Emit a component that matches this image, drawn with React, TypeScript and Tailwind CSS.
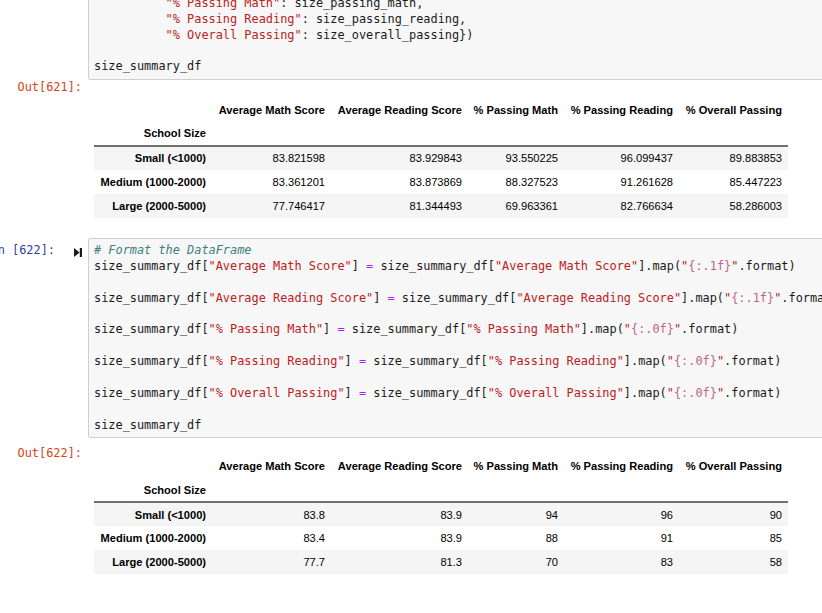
import type { ReactNode } from 'react';

type Tok = [string, string?];

const mono = "font-['DejaVu_Sans_Mono',monospace] text-[11.9px]";
const C = {
	str: 'text-[#ba2121]',
	fmt: 'text-[#bb6688]',
	op: 'text-[#aa22ff]',
	com: 'text-[#408080] italic',
};

const assign = (col: string, fmt: string): Tok[] => [
	['size_summary_df['],
	[`"${col}"`, C.str],
	['] '],
	['=', C.op],
	[' size_summary_df['],
	[`"${col}"`, C.str],
	['].map('],
	['"', C.str],
	[`{:${fmt}}`, C.fmt],
	['"', C.str],
	['.format)'],
];

const topLines: Tok[][] = [
	[['          '], ['"% Passing Math"', C.str], [': size_passing_math,']],
	[['          '], ['"% Passing Reading"', C.str], [': size_passing_reading,']],
	[['          '], ['"% Overall Passing"', C.str], [': size_overall_passing})']],
	[],
	[['size_summary_df']],
];

const formatLines: Tok[][] = [
	[['# Format the DataFrame', C.com]],
	assign('Average Math Score', '.1f'),
	[],
	assign('Average Reading Score', '.1f'),
	[],
	assign('% Passing Math', '.0f'),
	[],
	assign('% Passing Reading', '.0f'),
	[],
	assign('% Overall Passing', '.0f'),
	[],
	[['size_summary_df']],
];

const columns = [
	'Average Math Score',
	'Average Reading Score',
	'% Passing Math',
	'% Passing Reading',
	'% Overall Passing',
];
const widths = ['w-[118px]', 'w-[119px]', 'w-[137px]', 'w-[96px]', 'w-[115px]', 'w-[109px]'];
const sizes = ['Small (<1000)', 'Medium (1000-2000)', 'Large (2000-5000)'];

const rawData = [
	['83.821598', '83.929843', '93.550225', '96.099437', '89.883853'],
	['83.361201', '83.873869', '88.327523', '91.261628', '85.447223'],
	['77.746417', '81.344493', '69.963361', '82.766634', '58.286003'],
];
const formattedData = [
	['83.8', '83.9', '94', '96', '90'],
	['83.4', '83.9', '88', '91', '85'],
	['77.7', '81.3', '70', '83', '58'],
];

// run-cell glyph (triangle + bar)
const RunIcon = () => (
	<svg width="8" height="9" viewBox="0 0 8 9" className="mt-[2px] shrink-0">
		<path d="M0 0 L5.6 4.5 L0 9 Z" fill="#1a1a1a" />
		<rect x="5.8" y="0" width="2.2" height="9" fill="#1a1a1a" />
	</svg>
);

const CodeBox = ({ lines, className }: { lines: Tok[][]; className?: string }) => (
	<div
		className={`w-[800px] shrink-0 overflow-hidden rounded-[2px] border border-[#cfcfcf] bg-[#f7f7f7] pl-[5px] pt-[4px] pb-[4px] text-[#1a1a1a] ${mono} ${className ?? ''}`}
	>
		{lines.map((line, i) => (
			<div key={i} className="h-[15.85px] whitespace-pre leading-[15.85px]">
				{line.map(([text, cls], j) => (
					<span key={j} className={cls}>
						{text}
					</span>
				))}
			</div>
		))}
	</div>
);

const OutPrompt = ({ n }: { n: number }) => (
	<div
		className={`flex h-[15.85px] w-[88px] shrink-0 justify-end pr-[6px] leading-[15.85px] text-[#d84315] ${mono}`}
	>
		Out[{n}]:
	</div>
);

const SummaryTable = ({ data, className }: { data: string[][]; className?: string }) => (
	<table
		className={`table-fixed w-[694px] text-right text-[11.1px] text-black font-['Liberation_Sans',Arial,sans-serif] ${className ?? ''}`}
	>
		<colgroup>
			{widths.map((w, i) => (
				<col key={i} className={w} />
			))}
		</colgroup>
		<thead className="border-b-2 border-[#707070]">
			<tr className="h-[24px]">
				<th className="p-0" />
				{columns.map((c) => (
					<th key={c} className="whitespace-nowrap p-0 pr-[6px] font-bold">
						{c}
					</th>
				))}
			</tr>
			<tr className="h-[24px]">
				<th className="whitespace-nowrap p-0 pr-[6px] font-bold">School Size</th>
				{columns.map((c) => (
					<th key={c} className="p-0" />
				))}
			</tr>
		</thead>
		<tbody>
			{data.map((row, i) => (
				<tr key={i} className={`h-[24px] ${i % 2 === 0 ? 'bg-[#f5f5f5]' : 'bg-white'}`}>
					<th className="whitespace-nowrap p-0 pr-[6px] font-bold">{sizes[i]}</th>
					{row.map((v, j) => (
						<td key={j} className="p-0 pr-[6px]">
							{v}
						</td>
					))}
				</tr>
			))}
		</tbody>
	</table>
);

const Cell = ({ children, className }: { children: ReactNode; className?: string }) => (
	<div className={`flex items-start ${className ?? ''}`}>{children}</div>
);

export default function App() {
	return (
		<div className="h-[613px] w-[822px] overflow-hidden bg-white">
			{/* tail of the previous code cell */}
			<Cell className="mt-[-9px]">
				<div className="w-[88px] shrink-0" />
				<CodeBox lines={topLines} />
			</Cell>

			<Cell>
				<OutPrompt n={621} />
				<div className="pl-[6px] pt-[18px]">
					<SummaryTable data={rawData} />
				</div>
			</Cell>

			<Cell className="mt-[20px]">
				<div
					className={`flex h-[15.85px] w-[88px] shrink-0 items-center justify-end gap-[19px] pr-[6px] mt-[5px] leading-[15.85px] text-[#303f9f] ${mono}`}
				>
					<span className="shrink-0 whitespace-pre">In [622]:</span>
					<RunIcon />
				</div>
				<CodeBox lines={formatLines} />
			</Cell>

			<Cell className="mt-[8px]">
				<OutPrompt n={622} />
				<div className="pl-[6px] pt-[8px]">
					<SummaryTable data={formattedData} />
				</div>
			</Cell>
		</div>
	);
}
